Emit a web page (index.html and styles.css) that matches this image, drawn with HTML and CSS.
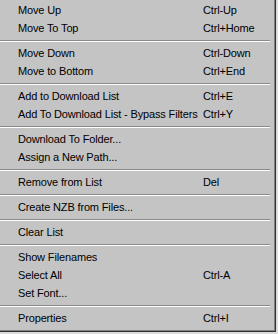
FILE: index.html
```html
<!DOCTYPE html>
<html>
<head>
    <title>List Context Menu</title>
    <link rel="stylesheet" href="styles.css">
</head>
<body>
    <div class="menu">
        <div class="item"><span>Move Up</span><span>Ctrl-Up</span></div>
        <div class="item"><span>Move To Top</span><span>Ctrl+Home</span></div>
        <div class="sep"></div>
        <div class="item"><span>Move Down</span><span>Ctrl-Down</span></div>
        <div class="item"><span>Move to Bottom</span><span>Ctrl+End</span></div>
        <div class="sep"></div>
        <div class="item"><span>Add to Download List</span><span>Ctrl+E</span></div>
        <div class="item"><span>Add To Download List - Bypass Filters</span><span>Ctrl+Y</span></div>
        <div class="sep"></div>
        <div class="item"><span>Download To Folder...</span><span></span></div>
        <div class="item"><span>Assign a New Path...</span><span></span></div>
        <div class="sep"></div>
        <div class="item"><span>Remove from List</span><span>Del</span></div>
        <div class="sep"></div>
        <div class="item"><span>Create NZB from Files...</span><span></span></div>
        <div class="sep"></div>
        <div class="item"><span>Clear List</span><span></span></div>
        <div class="sep"></div>
        <div class="item"><span>Show Filenames</span><span></span></div>
        <div class="item"><span>Select All</span><span>Ctrl-A</span></div>
        <div class="item"><span>Set Font...</span><span></span></div>
        <div class="sep"></div>
        <div class="item"><span>Properties</span><span>Ctrl+I</span></div>
    </div>
</body>
</html>
```

FILE: styles.css
```css
body {
    margin: 0;
    background-color: #dcdcdc;
    font-family: "Liberation Sans", Arial, sans-serif;
    font-size: 11px;
    letter-spacing: -0.15px;
    color: #000;
}
.menu {
    width: 276px;
    height: 332px;
    box-sizing: border-box;
    padding: 1px 2px 3px 0;
    background-color: #c4c4c4;
    box-shadow: inset -1px -1px #303030, inset -2px -2px #808080;
}
.item {
    display: grid;
    grid-template-columns: 185px 1fr;
    height: 18px;
    line-height: 19px;
    padding-left: 18px;
    white-space: nowrap;
}
.sep {
    margin: 3px 4px 2px 0;
    border-top: 1px solid #8a8a8a;
    border-bottom: 1px solid #fff;
}
```
